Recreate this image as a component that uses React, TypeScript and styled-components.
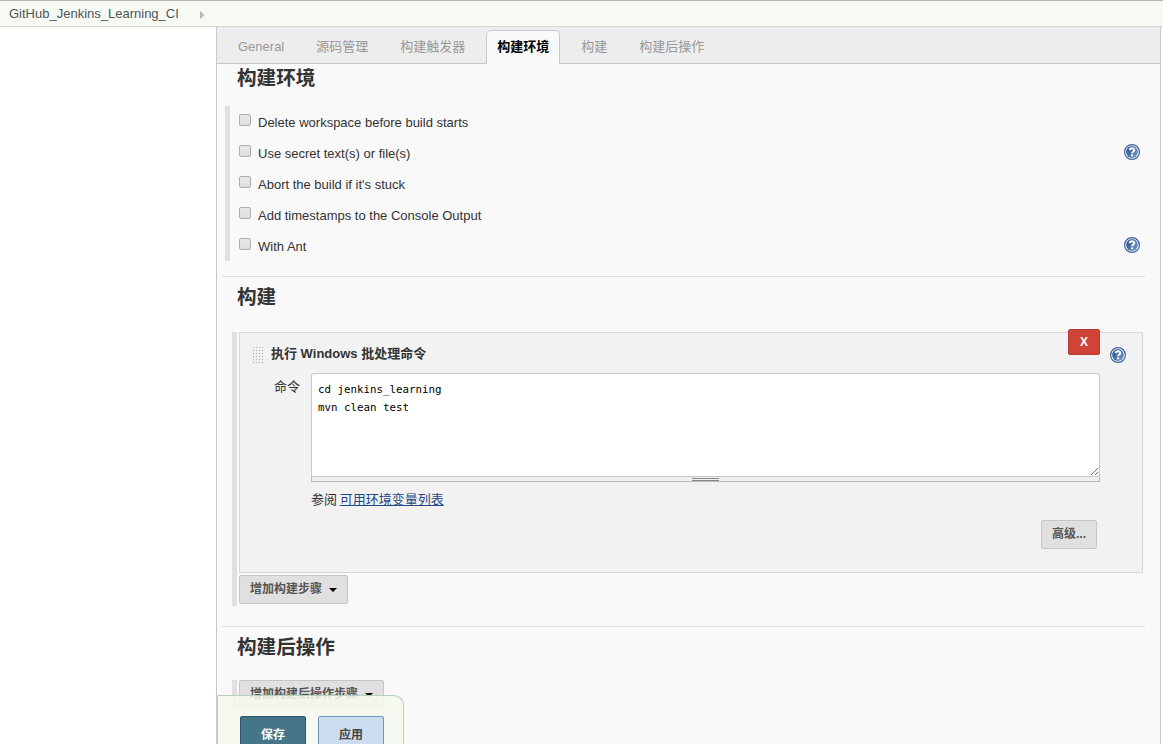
import React from "react";
import styled, { createGlobalStyle, css } from "styled-components";

const GlobalStyle = createGlobalStyle`
  *, *::before, *::after { box-sizing: border-box; }
  body {
    margin: 0;
    background: #fff;
    color: #333;
    font: 13px/18px "Liberation Sans", "Noto Sans CJK SC", sans-serif;
  }
`;

const Page = styled.div`
  position: relative;
  display: flex;
  flex-direction: column;
  height: 744px;
  overflow: hidden;
`;

const Breadcrumbs = styled.nav`
  display: flex;
  align-items: center;
  gap: 21px;
  flex: none;
  height: 27px;
  padding-left: 9px;
  background: #f6faf2;
  border-top: 1px solid #b4b8ae;
  border-bottom: 1px solid #d3d7cf;
  color: #4d545d;
`;

const CrumbArrow = styled.svg`
  display: block;
  margin-top: 2px;
`;

const Body = styled.div`
  display: flex;
  flex: 1;
  min-height: 0;
`;

const SidePanel = styled.aside`
  flex: none;
  width: 216px;
`;

const MainPanel = styled.main`
  flex: none;
  width: 945px;
  background: #f9f9f9;
  border-left: 1px solid #c8c8c8;
  border-right: 1px solid #c8c8c8;
`;

const TabBar = styled.div`
  display: flex;
  align-items: flex-end;
  gap: 10px;
  height: 37px;
  padding-left: 10px;
  background: #ededed;
  border-bottom: 1px solid #c8c8c8;
`;

const Tab = styled.a<{ $active?: boolean }>`
  height: 34px;
  margin-bottom: -1px;
  padding: 7px 10px 0;
  border: 1px solid transparent;
  border-bottom: 0;
  border-radius: 5px 5px 0 0;
  color: #999;
  white-space: nowrap;
  ${(p) =>
    p.$active &&
    css`
      background: #f9f9f9;
      border-color: #c8c8cc;
      color: #000;
      font-weight: 700;
    `}
`;

const Section = styled.section<{ $height: number }>`
  height: ${(p) => p.$height}px;
  margin: 0 15px 0 5px;
  & + & { border-top: 1px solid #dcdcdc; }
`;

const Heading = styled.h2<{ $top: number; $gap: number }>`
  margin: 0 0 ${(p) => p.$gap}px;
  padding: ${(p) => p.$top}px 0 0 15px;
  font-size: 19.6px;
  line-height: 28px;
`;

const OptionList = styled.div`
  margin-left: 3px;
  border-left: 5px solid #e0e0e0;
`;

const OptionRow = styled.div`
  display: flex;
  align-items: center;
  height: 31px;
  padding: 0 5px 2px 9px;
`;

const OptionLabel = styled.label`
  flex: 1;
  padding-top: 4px;
`;

const Checkbox = styled.input`
  appearance: none;
  width: 12px;
  height: 12px;
  margin: 0 7px 2px 0;
  border: 1px solid #adadad;
  border-radius: 2px;
  background: linear-gradient(#e9e9e9, #dedede);
`;

const StepArea = styled.div<{ $height: number }>`
  height: ${(p) => p.$height}px;
  margin: 0 2px 0 10px;
  padding-left: 2px;
  border-left: 5px solid #e0e0e0;
`;

const StepCard = styled.div`
  position: relative;
  width: 904px;
  height: 241px;
  margin-bottom: 2px;
  padding: 11px 42px 0 14px;
  background: #f2f2f2;
  border: 1px solid #d8d8d8;
`;

const StepTitle = styled.div`
  display: flex;
  align-items: center;
  gap: 7px;
  height: 20px;
  margin-left: -1px;
  padding-bottom: 1px;
  font-weight: 700;
`;

const DragHandle = styled.svg`
  display: block;
  margin-top: 3px;
`;

const Field = styled.div`
  display: flex;
  margin-top: 9px;
`;

const FieldLabel = styled.label`
  width: 57px;
  padding: 5px 11px 0 0;
  text-align: right;
`;

const FieldBody = styled.div`
  width: 789px;
`;

const Command = styled.textarea`
  display: block;
  width: 100%;
  height: 104px;
  margin: 0;
  padding: 7px 6px 6px;
  border: 1px solid #c8c8c8;
  border-radius: 3px 3px 0 0;
  background: #fff;
  color: #000;
  font: 10.8px/18px "DejaVu Sans Mono", monospace;
  outline: 0;
  resize: vertical;
`;

const ResizeBar = styled.div`
  display: flex;
  justify-content: center;
  height: 5px;
  padding-top: 1px;
  background: #eee;
  border: solid #bbb;
  border-width: 0 1px 1px;
`;

const ResizeGrip = styled.span`
  width: 27px;
  height: 3px;
  border: solid #888;
  border-width: 1px 0;
`;

const Hint = styled.p`
  margin: 9px 0 0;
  word-spacing: -1px;
`;

const Link = styled.a`
  color: #204a87;
  text-decoration: underline;
`;

const StepFooter = styled.div`
  display: flex;
  justify-content: flex-end;
  margin-top: 11px;
  padding-right: 3px;
`;

const Button = styled.button<{ $width: number; $tone?: "primary" | "apply" }>`
  display: flex;
  align-items: center;
  justify-content: center;
  gap: 7px;
  width: ${(p) => p.$width}px;
  height: 29px;
  padding: 0 0 2px;
  border: 1px solid #c6c6c6;
  border-radius: 2px;
  background: #e0e0e0;
  color: #555;
  font: bold 12px/18px "Liberation Sans", "Noto Sans CJK SC", sans-serif;
  ${(p) =>
    p.$tone &&
    css`
      height: 36px;
      padding: 2px 0 0;
      background: ${p.$tone === "primary" ? "#457687" : "#ccddf0"};
      border-color: ${p.$tone === "primary" ? "#2d5565" : "#7195bd"};
      color: ${p.$tone === "primary" ? "#fff" : "#444"};
    `}
`;

const Caret = styled.span`
  margin-top: 3px;
  border: 4px solid transparent;
  border-top-color: #000;
  border-bottom: 0;
`;

const DeleteButton = styled.button`
  position: absolute;
  top: -4px;
  right: 42px;
  width: 32px;
  height: 26px;
  padding: 0;
  border: 1px solid #b83d33;
  border-radius: 2px;
  background: #d04437;
  color: #fff;
  font: bold 12px "Liberation Sans", sans-serif;
`;

const CardHelp = styled.span`
  position: absolute;
  top: 14px;
  right: 16px;
`;

const HelpSvg = styled.svg`
  display: block;
`;

const BottomBar = styled.div`
  position: absolute;
  left: 217px;
  bottom: 0;
  display: flex;
  gap: 12px;
  width: 187px;
  height: 49px;
  padding: 20px 0 0 22px;
  border: 1px solid #b5d0b9;
  border-width: 1px 1px 0;
  border-left-color: #c3d3c3;
  border-top-right-radius: 10px;
  background: rgba(245, 249, 239, 0.86);
`;

function Help() {
  return (
    <HelpSvg width="16" height="16" viewBox="0 0 16 16">
      <defs>
        <linearGradient id="help-fill" x1="0" y1="0" x2="1" y2="0.7">
          <stop offset="0" stopColor="#244b88" />
          <stop offset="1" stopColor="#6f94c4" />
        </linearGradient>
      </defs>
      <circle cx="8" cy="8" r="7.4" fill="#fff" stroke="#3b609b" strokeWidth="1.2" />
      <circle cx="8" cy="8" r="5.9" fill="url(#help-fill)" />
      <path d="M5.8 6.1C5.9 3.7 10.3 3.7 10.3 6C10.3 7.6 8.1 7.5 8.1 9.3" fill="none" stroke="#fff" strokeWidth="2" />
      <rect x="7.1" y="10.3" width="2" height="2" fill="#fff" />
    </HelpSvg>
  );
}

function Grip() {
  return (
    <DragHandle width="11" height="17" viewBox="0 0 11 17">
      {[0, 3, 6, 9, 12, 15].map((y) =>
        [0, 3, 6, 9].map((x) => (
          <React.Fragment key={`${x}-${y}`}>
            <rect x={x} y={y} width="2" height="2" fill="#fff" />
            <rect x={x} y={y} width="1.3" height="1.3" fill="#b0b0b0" />
          </React.Fragment>
        ))
      )}
    </DragHandle>
  );
}

const tabs = ["General", "源码管理", "构建触发器", "构建环境", "构建", "构建后操作"];

const options = [
  { label: "Delete workspace before build starts" },
  { label: "Use secret text(s) or file(s)", help: true },
  { label: "Abort the build if it's stuck" },
  { label: "Add timestamps to the Console Output" },
  { label: "With Ant", help: true },
];

export default function App() {
  return (
    <Page>
      <GlobalStyle />
      <Breadcrumbs>
        <span>GitHub_Jenkins_Learning_CI</span>
        <CrumbArrow width="5" height="8" viewBox="0 0 5 8">
          <path d="M0 0L4.5 4L0 8Z" fill="#b5b8b2" />
        </CrumbArrow>
      </Breadcrumbs>
      <Body>
        <SidePanel />
        <MainPanel>
          <TabBar>
            {tabs.map((name) => (
              <Tab key={name} $active={name === "构建环境"}>{name}</Tab>
            ))}
          </TabBar>

          <Section $height={212}>
            <Heading $top={0} $gap={14}>构建环境</Heading>
            <OptionList>
              {options.map((option) => (
                <OptionRow key={option.label}>
                  <Checkbox type="checkbox" id={option.label} />
                  <OptionLabel htmlFor={option.label}>{option.label}</OptionLabel>
                  {option.help && <Help />}
                </OptionRow>
              ))}
            </OptionList>
          </Section>

          <Section $height={350}>
            <Heading $top={6} $gap={21}>构建</Heading>
            <StepArea $height={274}>
              <StepCard>
                <StepTitle>
                  <Grip />
                  执行 Windows 批处理命令
                </StepTitle>
                <DeleteButton>X</DeleteButton>
                <CardHelp><Help /></CardHelp>
                <Field>
                  <FieldLabel htmlFor="command">命令</FieldLabel>
                  <FieldBody>
                    <Command id="command" spellCheck={false} defaultValue={"cd jenkins_learning\nmvn clean test"} />
                    <ResizeBar><ResizeGrip /></ResizeBar>
                    <Hint>参阅 <Link>可用环境变量列表</Link></Hint>
                  </FieldBody>
                </Field>
                <StepFooter>
                  <Button $width={56}>高级...</Button>
                </StepFooter>
              </StepCard>
              <Button $width={109}>增加构建步骤 <Caret /></Button>
            </StepArea>
          </Section>

          <Section $height={118}>
            <Heading $top={6} $gap={19}>构建后操作</Heading>
            <StepArea $height={30}>
              <Button $width={145}>增加构建后操作步骤 <Caret /></Button>
            </StepArea>
          </Section>
        </MainPanel>
      </Body>
      <BottomBar>
        <Button $width={66} $tone="primary">保存</Button>
        <Button $width={66} $tone="apply">应用</Button>
      </BottomBar>
    </Page>
  );
}
